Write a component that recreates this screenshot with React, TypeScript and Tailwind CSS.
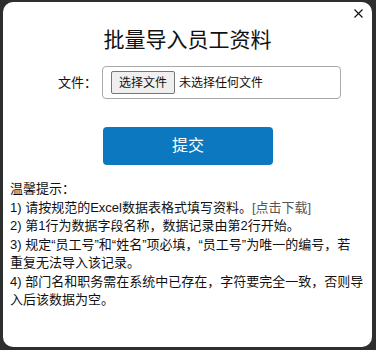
import React from 'react';

const tips = [
  { key: 'head', text: '温馨提示：' },
  { key: 'l1', text: '1) 请按规范的Excel数据表格式填写资料。', link: '[点击下载]' },
  { key: 'l2', text: '2) 第1行为数据字段名称，数据记录由第2行开始。' },
  { key: 'l3a', text: '3) 规定“员工号”和“姓名”项必填，“员工号”为唯一的编号，若' },
  { key: 'l3b', text: '重复无法导入该记录。' },
  { key: 'l4a', text: '4) 部门名和职务需在系统中已存在，字符要完全一致，否则导' },
  { key: 'l4b', text: '入后该数据为空。' },
];

export default function App() {
  return (
    <div
      className="h-[350px] w-[376px] bg-[#2e2e2e] pt-[2px] pl-[3px]"
      style={{ fontFamily: '"Liberation Sans", "Noto Sans CJK SC", sans-serif' }}
    >
      <div className="relative h-[345px] w-[369px] rounded-[10px] bg-white text-[#111]">
        {/* close */}
        <button className="absolute right-[7px] top-[5px] flex h-[13px] w-[13px] items-center justify-center">
          <svg width="9" height="9" viewBox="0 0 9 9">
            <path d="M0.5 0.5 L8.5 8.5 M8.5 0.5 L0.5 8.5" stroke="#111" strokeWidth="1.1" />
          </svg>
        </button>

        <h1 className="pt-[23px] text-center text-[21px] leading-[30px]">批量导入员工资料</h1>

        {/* file row */}
        <div className="mt-[11px] flex items-center pl-[55px]">
          <span className="w-[44px] text-[13px]">文件：</span>
          <div className="flex h-[33px] w-[239px] items-center rounded-[4px] border border-[#a9a9a9] pl-[8px]">
            <span className="flex h-[23px] w-[64px] items-center justify-center rounded-[2px] border border-[#767676] bg-[#efefef] text-[12px] leading-none">
              选择文件
            </span>
            <span className="ml-[4px] text-[12px]">未选择任何文件</span>
          </div>
        </div>

        <button className="ml-[100px] mt-[28px] flex h-[38px] w-[170px] items-center justify-center rounded-[4px] bg-[#0b78bf] text-[16px] text-white">
          提交
        </button>

        {/* tips */}
        <div className="mt-[15px] px-[7px] text-[13px] leading-[1.42857]">
          {tips.map(t => (
            <div key={t.key} className="whitespace-nowrap">
              {t.text}
              {t.link && <span className="text-[#555]">{t.link}</span>}
            </div>
          ))}
        </div>
      </div>
    </div>
  );
}
